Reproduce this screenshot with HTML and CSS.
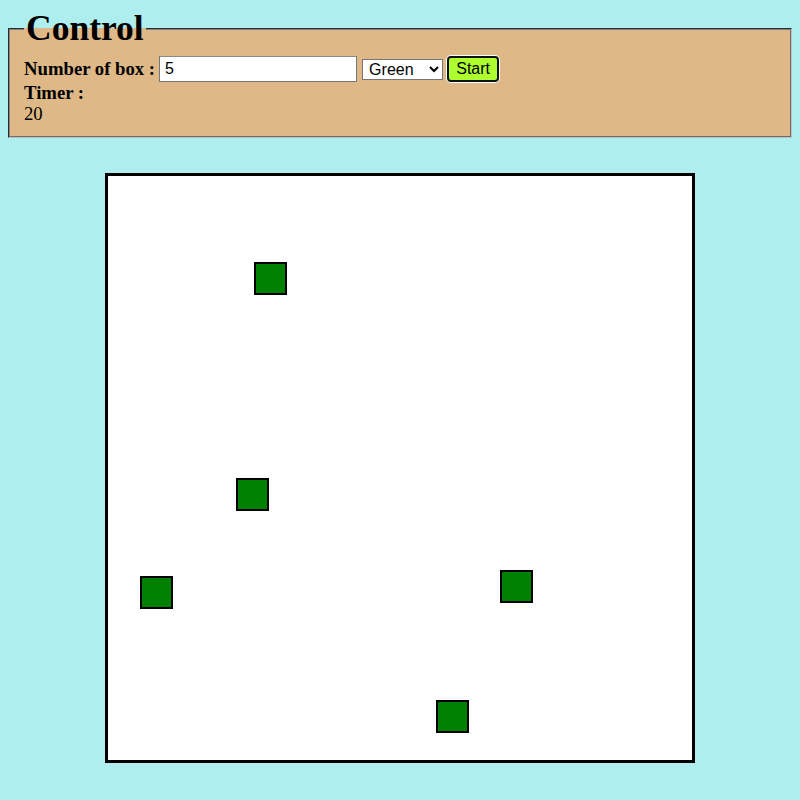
FILE: index.html
```html
<!DOCTYPE html>
<html>
<head>
<meta charset="utf-8">
<link rel="stylesheet" href="styles.css">
</head>
<body>
<fieldset class="control">
  <legend class="title">Control</legend>
  <div class="row">
    <label class="lbl" for="num">Number of box :</label>
    <input id="num" class="num" type="text" value="5">
    <select class="color"><option>Green</option><option>Red</option><option>Blue</option></select>
    <button class="start">Start</button>
  </div>
  <div class="lbl timer-label">Timer :</div>
  <div class="timer">20</div>
</fieldset>
<div class="board">
  <div class="box" style="left:146px;top:86px"></div>
  <div class="box" style="left:128px;top:302px"></div>
  <div class="box" style="left:32px;top:400px"></div>
  <div class="box" style="left:392px;top:394px"></div>
  <div class="box" style="left:328px;top:524px"></div>
</div>
</body>
</html>
```
FILE: styles.css
```css
html, body { margin: 0; padding: 0; }
body {
  background: #afeeee;
  padding: 8px;
  font-family: "Liberation Serif", serif;
  font-size: 18.72px;
  color: #000;
}
.control {
  background: #deb887;
  margin: 0;
  border: 2px groove #c0c0c0;
  border-color: #808080 #c0c0c0 #c0c0c0 #808080;
  padding: 6px 14px 12px 14px;
}
.title {
  font-size: 35.5px;
  font-weight: bold;
  padding: 0 2px;
  line-height: 41px;
}
.row {
  display: flex;
  align-items: center;
  height: 27px;
  padding-top: 1px;
  box-sizing: border-box;
}
.lbl { font-weight: bold; }
.num {
  width: 198px;
  height: 26px;
  box-sizing: border-box;
  margin: 0 4px 0 4px;
  border: 1px solid #767676;
  border-top-color: #8a8a8a;
  padding: 1px 5px;
  font-family: "Liberation Sans", Arial, sans-serif;
  font-size: 16px;
}
.color {
  width: 81px;
  height: 21px;
  box-sizing: border-box;
  margin: 0 4px 0 1px;
  font-family: "Liberation Sans", Arial, sans-serif;
  font-size: 16px;
  border: 1px solid #767676;
  border-radius: 0;
  background: #fff;
  padding: 0 2px;
}
.start {
  width: 52px;
  height: 26px;
  box-sizing: border-box;
  background: #adff2f;
  border: 2px solid #101010;
  border-radius: 4px;
  box-shadow: 0 0 0 1px #fff;
  font-family: "Liberation Sans", Arial, sans-serif;
  font-size: 16px;
  padding: 0;
  color: #000;
}
.timer-label { line-height: 22px; }
.timer { line-height: 20px; }
.board {
  position: relative;
  width: 584px;
  height: 584px;
  margin: 35px auto 0;
  background: #fff;
  border: 3px solid #000;
}
.box {
  position: absolute;
  width: 29px;
  height: 29px;
  background: #008000;
  border: 2px solid #000;
}
```
